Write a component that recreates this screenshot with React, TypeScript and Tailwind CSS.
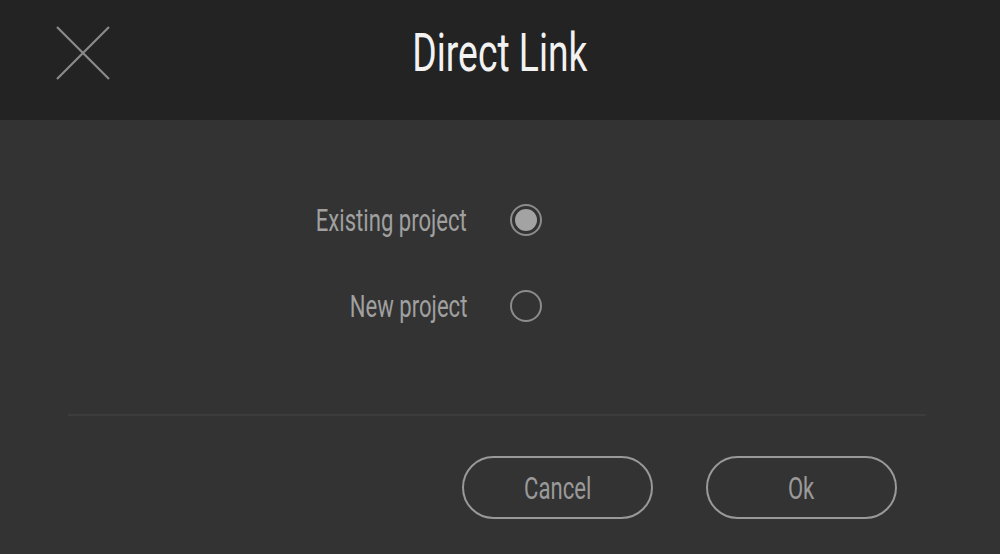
import React from "react";

const font = { fontFamily: "Roboto, 'Noto Sans', sans-serif" };

function Radio({ checked }: { checked?: boolean }) {
  return (
    <div className="w-[32px] h-[32px] rounded-full border-2 border-[#8c8c8c] flex items-center justify-center">
      {checked && <div className="w-[22px] h-[22px] rounded-full bg-[#a3a3a3]" />}
    </div>
  );
}

function Row({ label, checked }: { label: string; checked?: boolean }) {
  return (
    <div className="flex items-center h-[32px]">
      <div className="w-[200px] flex justify-end">
        <span className="inline-block origin-right scale-x-[0.69] whitespace-nowrap text-[32px] leading-none text-[#a0a0a0]">
          {label}
        </span>
      </div>
      <div className="ml-[43px]">
        <Radio checked={checked} />
      </div>
    </div>
  );
}

function Button({ label }: { label: string }) {
  return (
    <div className="w-[191px] h-[63px] rounded-full border-2 border-[#999999] flex items-center justify-center">
      <span className="inline-block scale-x-[0.69] text-[32px] leading-none text-[#9a9a9a]">{label}</span>
    </div>
  );
}

export default function App() {
  return (
    <div className="w-[1000px] h-[554px] bg-[#333333] flex flex-col" style={font}>
      <div className="h-[120px] pb-[14px] bg-[#232323] grid grid-cols-[1fr_auto_1fr] items-center">
        <div className="pl-[56px] flex">
          <svg width="54" height="54" viewBox="0 0 54 54">
            <path d="M1 1 L53 53 M53 1 L1 53" stroke="#8a8a8a" strokeWidth="2.2" />
          </svg>
        </div>
        <div className="flex justify-center">
          <span className="inline-block scale-x-[0.69] text-[54px] leading-none text-[#f2f2f2] whitespace-nowrap">
            Direct Link
          </span>
        </div>
        <div />
      </div>
      <div className="flex flex-col gap-[54px] pt-[84px] pl-[267px]">
        <Row label="Existing project" checked />
        <Row label="New project" />
      </div>
      <div className="mt-[92px] mx-[68px] mr-[74px] h-[2px] bg-[#3c3c3c]" />
      <div className="flex justify-end gap-[53px] pt-[40px] pr-[103px]">
        <Button label="Cancel" />
        <Button label="Ok" />
      </div>
    </div>
  );
}
